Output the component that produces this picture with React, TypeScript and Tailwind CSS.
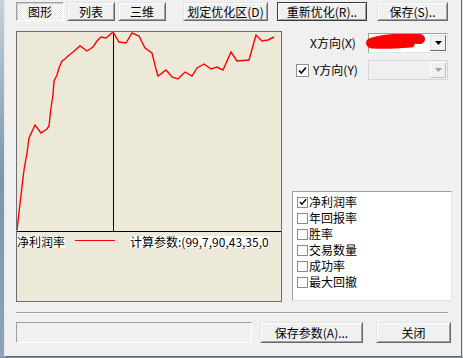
import React from "react";

const points: [number, number][] = [
  [0, 198], [4, 163], [7, 138], [10, 121], [12, 106], [18, 93], [24, 101],
  [30, 97], [32, 94], [34, 76], [36, 63], [37, 49], [40, 43], [42, 36],
  [45, 29], [48, 27], [51, 24], [56, 20], [63, 14], [70, 19], [76, 15],
  [80, 9], [84, 5], [89, 6], [96, 0], [102, 10], [109, 11], [115, 1],
  [122, 4], [128, 16], [135, 21], [137, 29], [139, 37], [141, 44], [149, 38],
  [155, 45], [161, 47], [168, 40], [175, 44], [180, 36], [187, 32], [194, 37],
  [200, 35], [206, 38], [214, 20], [220, 29], [232, 28], [239, 3], [245, 9],
  [251, 8], [257, 5],
];

const metrics = ["净利润率", "年回报率", "胜率", "交易数量", "成功率", "最大回撤"];

function Button({
  className,
  children,
  isDefault,
}: {
  className: string;
  children: React.ReactNode;
  isDefault?: boolean;
}) {
  return (
    <div
      className={`flex items-center justify-center bg-[#f0f0f0] text-[12px] leading-[12px] whitespace-nowrap ${
        isDefault
          ? "border border-[#3c3c3c] shadow-[inset_1px_1px_0_#ffffff,inset_-1px_-1px_0_#a0a0a0]"
          : "border border-t-[#e3e3e3] border-l-[#e3e3e3] border-b-[#696969] border-r-[#696969] shadow-[inset_1px_1px_0_#ffffff,inset_-1px_-1px_0_#a0a0a0]"
      } ${className}`}
    >
      {children}
    </div>
  );
}

function Check({ className }: { className: string }) {
  return (
    <svg viewBox="0 0 9 9" className={className}>
      <polyline points="1,4.5 3.3,7 8,1.5" fill="none" stroke="#000" strokeWidth="1.6" />
    </svg>
  );
}

function Arrow({ color }: { color: string }) {
  return (
    <svg width="7" height="4" viewBox="0 0 7 4">
      <polygon points="0,0 7,0 3.5,4" fill={color} />
    </svg>
  );
}

export default function App() {
  return (
    <div className="w-[463px] h-[358px] flex flex-col overflow-hidden bg-[#7f97aa] font-['Noto_Sans_CJK_SC','Liberation_Sans',sans-serif] text-black">
      <div className="flex h-[357px]">
        <div className="w-[4px] bg-gradient-to-b from-[#c4d1dc] via-[#7c95a9] to-[#8da3b5]" />
        <div className="w-[458px] bg-[#f0f0f0] border-l border-l-[#e4e9ed] border-r border-r-[#646464] border-b border-b-[#646464] flex flex-col">
          {/* top buttons */}
          <div className="flex items-start pl-[11px] pt-[2px] h-[31px]">
            <div className="w-[48px] h-[19px] flex items-center justify-center text-[12px] leading-[12px] border border-t-[#a0a0a0] border-l-[#a0a0a0] border-b-white border-r-white shadow-[inset_1px_1px_0_#d0d0d0] bg-[image:repeating-conic-gradient(#ffffff_0%_25%,#e6e6e6_0%_50%)] bg-[length:2px_2px]">
              图形
            </div>
            <Button className="ml-[3px] w-[48px] h-[19px]">列表</Button>
            <Button className="ml-[3px] w-[48px] h-[19px]">三维</Button>
            <Button className="ml-[17px] w-[85px] h-[19px]">划定优化区(D)</Button>
            <Button className="ml-[9px] w-[90px] h-[19px]" isDefault>
              重新优化(R)..
            </Button>
            <Button className="ml-[10px] w-[71px] h-[19px]">保存(S)..</Button>
          </div>

          {/* main */}
          <div className="flex">
            <div className="ml-[11px] w-[266px] h-[271px] border border-[#6e6e6e] bg-[#ece9d8] overflow-hidden">
              <div className="relative h-[200px] border-b border-black">
                <svg width="264" height="199" viewBox="0 0 264 199" className="block">
                  <line x1="96.5" y1="0" x2="96.5" y2="199" stroke="#000" strokeWidth="1" />
                  <polyline
                    points={points.map((p) => p.join(",")).join(" ")}
                    fill="none"
                    stroke="#ff0000"
                    strokeWidth="1.4"
                  />
                </svg>
              </div>
              <div className="mt-[4px] flex items-start whitespace-nowrap text-[12px] leading-[12px]">
                <span className="bg-white">净利润率</span>
                <div className="ml-[10px] mt-[4px] w-[40px] h-[1px] bg-[#ff0000]" />
                <span className="ml-[15px] bg-white">计算参数:(99,7,90,43,35,0</span>
              </div>
            </div>

            <div className="flex flex-col">
              <div className="mt-[2px] flex items-center h-[20px]">
                <span className="ml-[28px] w-[58px] text-[12px] leading-[12px]">X方向(X)</span>
                <div className="relative w-[80px] h-[20px] bg-white border border-t-[#a0a0a0] border-l-[#a0a0a0] border-b-[#e3e3e3] border-r-[#e3e3e3] flex justify-end p-[1px]">
                  <div className="w-[16px] h-full flex items-center justify-center bg-[#f0f0f0] border border-t-[#e3e3e3] border-l-[#e3e3e3] border-b-[#696969] border-r-[#696969]">
                    <Arrow color="#000" />
                  </div>
                  <svg width="64" height="18" viewBox="0 0 64 18" className="absolute left-[-4px] top-[0px]">
                    <path d="M6 9 C18 5 36 4 55 5" stroke="#ff0000" strokeWidth="10" strokeLinecap="round" fill="none" />
                    <path d="M7 11 C20 12 34 11 46 10" stroke="#ff0000" strokeWidth="7" strokeLinecap="round" fill="none" />
                  </svg>
                </div>
              </div>
              <div className="mt-[7px] flex items-center h-[20px]">
                <div className="ml-[14px] w-[13px] h-[13px] bg-white border border-[#8e8f8f] flex items-center justify-center">
                  <Check className="w-[9px] h-[9px]" />
                </div>
                <span className="ml-[4px] w-[55px] text-[12px] leading-[12px]">Y方向(Y)</span>
                <div className="w-[80px] h-[20px] bg-[#f0f0f0] border border-[#d6d6d6] flex justify-end p-[1px]">
                  <div className="w-[16px] h-full flex items-center justify-center bg-[#f0f0f0] border border-t-white border-l-white border-b-[#c0c0c0] border-r-[#c0c0c0]">
                    <Arrow color="#a0a0a0" />
                  </div>
                </div>
              </div>
              <div className="mt-[111px] ml-[10px] w-[160px] h-[110px] bg-white border border-t-[#a0a0a0] border-l-[#a0a0a0] border-b-[#e3e3e3] border-r-[#e3e3e3] pt-[2px]">
                {metrics.map((m, i) => (
                  <div key={m} className="flex items-center h-[16px] text-[12px] leading-[12px]">
                    <div className="ml-[4px] w-[11px] h-[11px] border border-[#8a8a8a] bg-white flex items-center justify-center">
                      {i === 0 && <Check className="w-[8px] h-[8px]" />}
                    </div>
                    <span className="ml-[1px]">{m}</span>
                  </div>
                ))}
              </div>
            </div>
          </div>

          {/* separator */}
          <div className="mt-[10px] ml-[11px] w-[432px] h-[2px] border-t border-t-[#a0a0a0] border-b border-b-white" />

          {/* bottom */}
          <div className="mt-[8px] flex items-start">
            <div className="ml-[11px] w-[236px] h-[21px] border border-t-[#a0a0a0] border-l-[#a0a0a0] border-b-white border-r-white" />
            <Button className="ml-[8px] w-[103px] h-[21px]">保存参数(A)...</Button>
            <Button className="ml-[13px] w-[75px] h-[21px]">关闭</Button>
          </div>
        </div>
        <div className="w-[1px] bg-[#dde3e8]" />
      </div>
      <div className="h-[1px] bg-[#7d96a9]" />
    </div>
  );
}
